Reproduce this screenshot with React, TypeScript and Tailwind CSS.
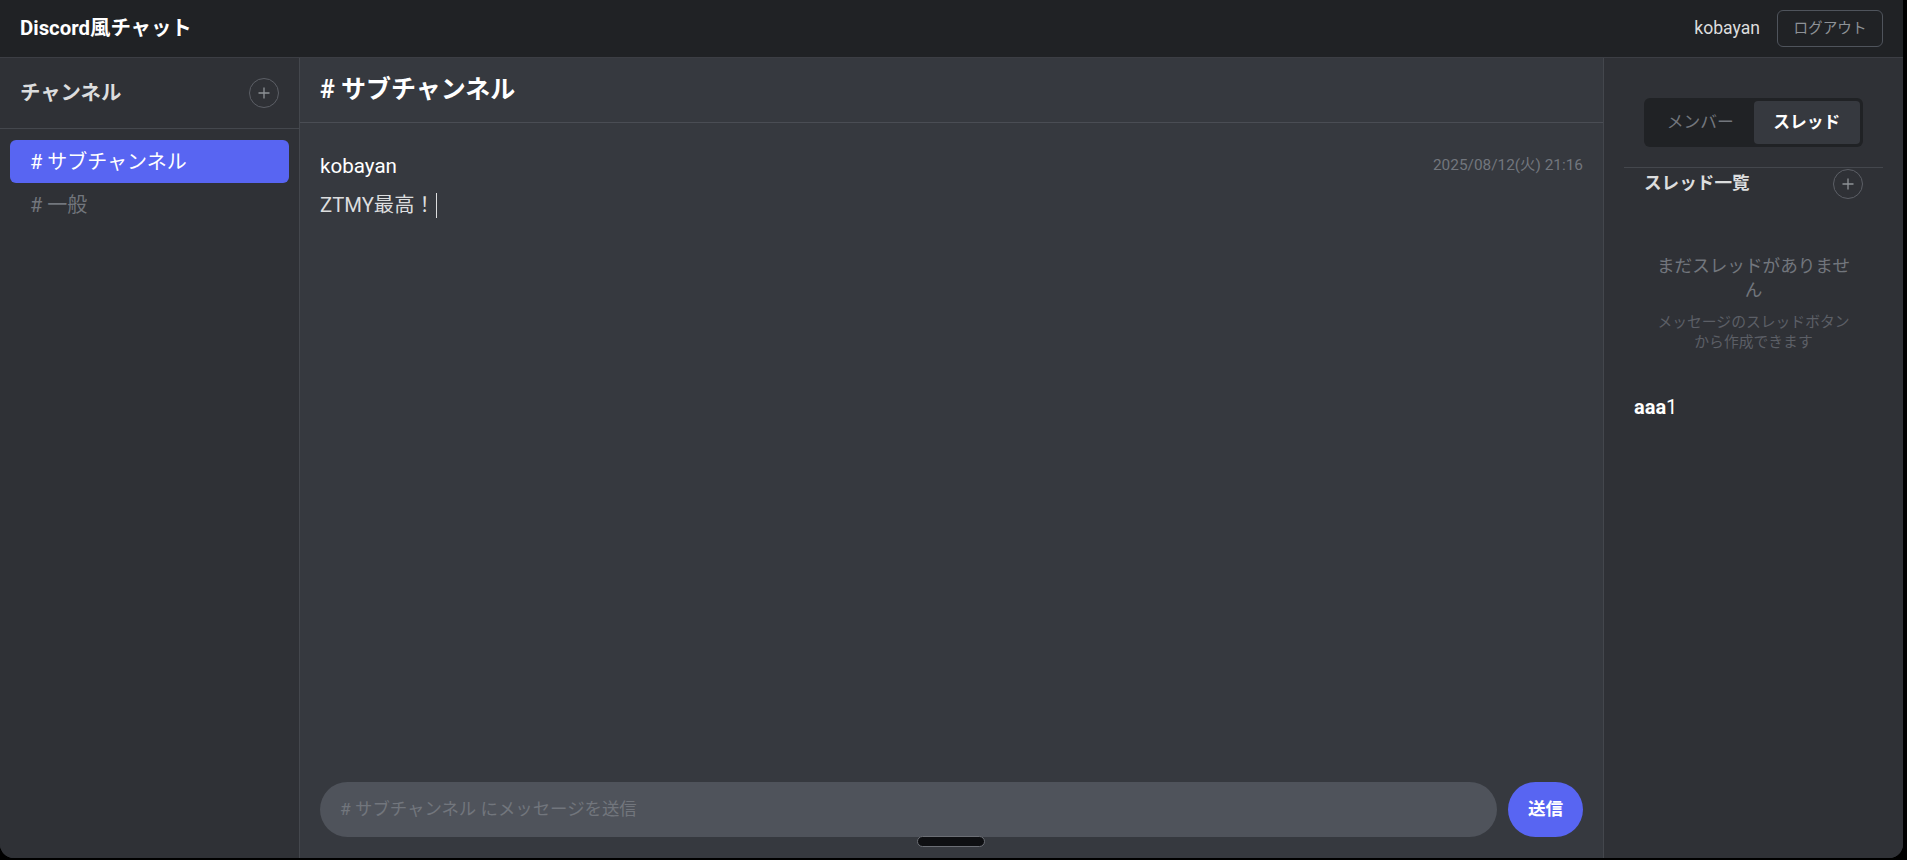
import React from "react";

const font = { fontFamily: 'Roboto, "Noto Sans CJK JP", sans-serif' };

function PlusCircle() {
  return (
    <button className="w-[30px] h-[30px] rounded-full border border-[#5c5f66] flex items-center justify-center text-[#8e9297]">
      <svg width="14" height="14" viewBox="0 0 14 14" fill="none" stroke="currentColor" strokeWidth="1.3">
        <path d="M7 1.5v11M1.5 7h11" />
      </svg>
    </button>
  );
}

/**
 * Channel sidebar
 */
function ChannelSidebar() {
  const channels = ["サブチャンネル", "一般"];
  return (
    <aside className="w-[300px] shrink-0 bg-[#2f3136] border-r border-[#44474d] flex flex-col">
      <div className="h-[71px] border-b border-[#44474d] flex items-center justify-between pl-[20px] pr-[20px]">
        <h2 className="text-[20.4px] font-bold text-[#dcddde]">チャンネル</h2>
        <PlusCircle />
      </div>
      <ul className="pt-[11px] px-[10px] flex flex-col">
        {channels.map((name, i) => (
          <li
            key={name}
            className={
              i === 0
                ? "h-[43px] rounded-[6px] bg-[#5865f2] text-white flex items-center pl-[20px] text-[20px]"
                : "h-[43px] rounded-[6px] text-[#72767d] flex items-center pl-[20px] text-[20px]"
            }
          >
            # {name}
          </li>
        ))}
      </ul>
    </aside>
  );
}

/**
 * Main chat area
 */
function ChatArea() {
  return (
    <main className="flex-1 min-w-0 bg-[#36393f] flex flex-col">
      <div className="h-[65px] border-b border-[#4a4d54] flex items-center px-[20px]">
        <h1 className="text-[25px] font-bold text-white"># サブチャンネル</h1>
      </div>

      <div className="flex-1 pt-[31px] px-[20px]">
        <div className="h-[24px] flex items-center justify-between">
          <span className="text-[20.6px] text-white">kobayan</span>
          <span className="text-[15.4px] text-[#72767d]">2025/08/12(火) 21:16</span>
        </div>
        <div className="mt-[15px] h-[24px] flex items-center text-[20.3px] text-[#dcddde]">
          ZTMY最高！
          <span className="inline-block w-px h-[25px] bg-[#dcddde] ml-[1px]" />
        </div>
      </div>

      <div className="flex items-center gap-[11px] px-[20px] pb-[21px]">
        <div className="flex-1 h-[55px] rounded-full bg-[#4f535b] flex items-center pl-[20px] text-[17.4px] text-[#72767d]">
          # サブチャンネル にメッセージを送信
        </div>
        <button className="w-[75px] h-[55px] rounded-full bg-[#5865f2] text-white font-bold text-[17.6px]">
          送信
        </button>
      </div>
    </main>
  );
}

/**
 * Members / Threads panel
 */
function ThreadPanel() {
  return (
    <aside className="w-[300px] shrink-0 bg-[#2f3136] border-l border-[#44474d] flex flex-col px-[20px] pt-[40px]">
      <div className="mx-[20px] h-[49px] rounded-[6px] bg-[#202225] p-[3px] flex">
        <button className="flex-1 text-[16.8px] text-[#72767d]">メンバー</button>
        <button className="flex-1 rounded-[4px] bg-[#36393f] text-[16.8px] font-bold text-white">スレッド</button>
      </div>

      <div className="mt-[20px] border-t border-[#44474d]">
        <div className="h-[31px] flex items-center justify-between pl-[20px] pr-[20px]">
          <h3 className="text-[17.6px] font-bold text-[#dcddde]">スレッド一覧</h3>
          <PlusCircle />
        </div>

        <div className="mt-[55px] w-[200px] mx-auto text-center">
          <p className="text-[17.6px] leading-[24px] text-[#72767d]">まだスレッドがありません</p>
          <p className="mt-[10px] text-[14.8px] leading-[20px] text-[#5c5f66]">
            メッセージのスレッドボタンから作成できます
          </p>
        </div>

        <div className="mt-[43px] pl-[10px] text-[20px] leading-[24px] text-white">
          <span className="font-bold">aaa</span>1
        </div>
      </div>
    </aside>
  );
}

export default function App() {
  return (
    <div className="w-[1907px] h-[860px] bg-black relative overflow-hidden" style={font}>
      <div className="w-[1903px] h-[858px] rounded-b-[14px] overflow-hidden flex flex-col bg-[#36393f]">
        <header className="h-[58px] shrink-0 bg-[#202225] border-b border-[#3c3e44] flex items-center justify-between pl-[20px] pr-[20px]">
          <span className="text-[20.4px] font-bold text-white">Discord風チャット</span>
          <div className="flex items-center gap-[17px]">
            <span className="text-[17.6px] text-[#dcddde]">kobayan</span>
            <button className="w-[106px] h-[37px] rounded-[6px] border border-[#4f545c] text-[14.6px] text-[#8e9297]">
              ログアウト
            </button>
          </div>
        </header>

        <div className="flex-1 flex min-h-0">
          <ChannelSidebar />
          <ChatArea />
          <ThreadPanel />
        </div>
      </div>

      {/* window handle */}
      <div className="absolute left-[917px] top-[836px] w-[68px] h-[11px] rounded-full bg-[#0e0f12] border border-[#6b6e75]" />
    </div>
  );
}
